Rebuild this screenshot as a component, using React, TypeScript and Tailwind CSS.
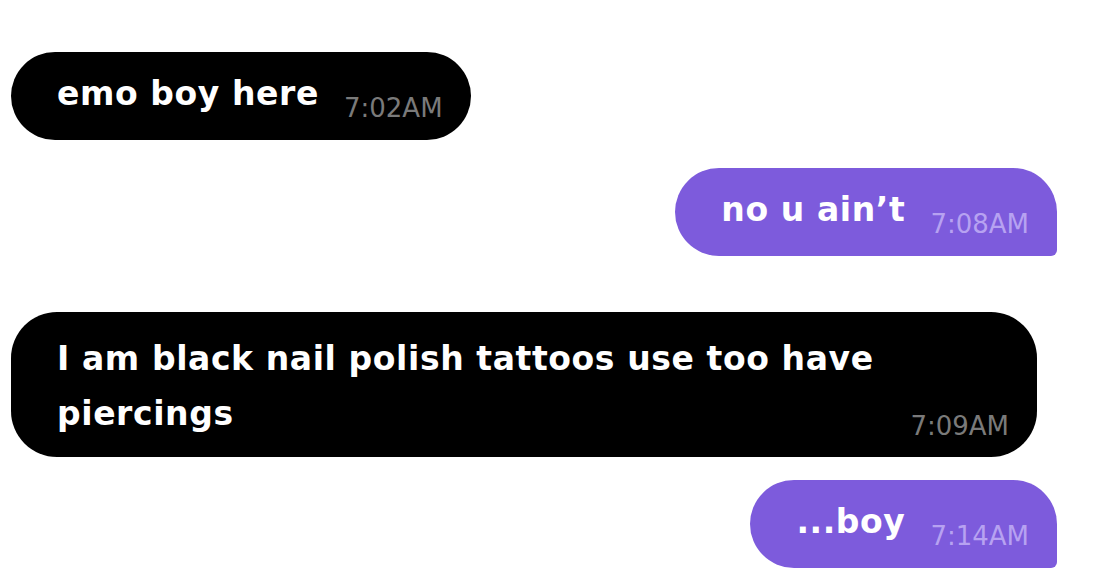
type Msg = {
  id: number;
  text: string;
  time: string;
  mine: boolean;
  gap: string;
  wide?: boolean;
};

const messages: Msg[] = [
  { id: 1, text: "emo boy here", time: "7:02AM", mine: false, gap: "mt-[52px]" },
  { id: 2, text: "no u ain\u2019t", time: "7:08AM", mine: true, gap: "mt-[28px]" },
  { id: 3, text: "I am black nail polish tattoos use too have piercings", time: "7:09AM", mine: false, gap: "mt-[56px]", wide: true },
  { id: 4, text: "...boy", time: "7:14AM", mine: true, gap: "mt-[23px]" },
];

const Bubble = ({ m }: { m: Msg }) => {
  const shape = m.mine
    ? "bg-[#7d5bdc] rounded-l-[44px] rounded-tr-[44px] rounded-br-[6px]"
    : "bg-black rounded-[46px]";
  const timeColor = m.mine ? "text-[#b7a2f1]" : "text-[#7a7a7a]";
  const pad = m.wide ? "pt-[19px] pb-[16px] w-[1026px]" : "pt-[14px] pb-[19px]";

  return (
    <div className={`flex ${m.mine ? "justify-end pr-[61px]" : "justify-start pl-[11px]"} ${m.gap}`}>
      <div className={`flex items-end gap-[25px] pl-[46px] pr-[28px] ${pad} ${shape}`}>
        <p className="text-white font-bold text-[33px] tracking-[0.6px] leading-[55px] flex-1">{m.text}</p>
        <span className={`text-[26px] leading-none ${m.wide ? "mb-[2px]" : ""} whitespace-nowrap ${timeColor}`}>
          {m.time}
        </span>
      </div>
    </div>
  );
};

const App = () => {
  return (
    <div className="w-[1118px] h-[580px] bg-white overflow-hidden flex flex-col font-['DejaVu_Sans',sans-serif]">
      {messages.map(m => (
        <Bubble key={m.id} m={m} />
      ))}
    </div>
  );
};

export default App;
